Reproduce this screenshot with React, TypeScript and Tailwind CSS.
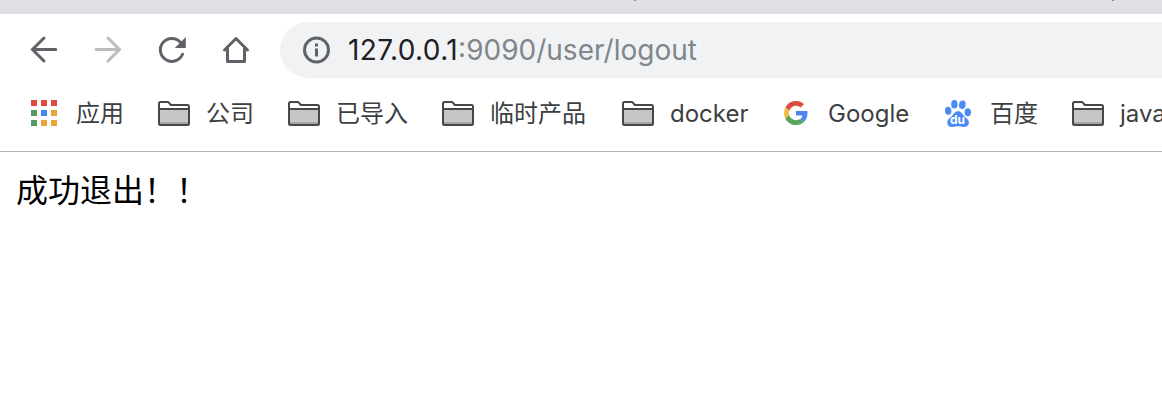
import type { ReactNode } from "react";

const appColors = [
  "#e2483d", "#e2483d", "#e2483d",
  "#549a5e", "#4688f1", "#e6a63a",
  "#549a5e", "#e6a63a", "#e6a63a",
];

function AppsIcon() {
  return (
    <svg className="h-[26px] w-[26px]" viewBox="0 0 26 26" shapeRendering="crispEdges">
      {appColors.map((color, i) => (
        <rect key={i} x={(i % 3) * 10} y={Math.floor(i / 3) * 10} width="6" height="6" fill={color} />
      ))}
    </svg>
  );
}

function FolderIcon() {
  return (
    <svg className="h-[26px] w-8" viewBox="0 0 32 26" fill="none">
      <path d="M1 8H31V23.500Q31 25 29.500 25H2.500Q1 25 1 23.500Z" fill="#c6c6c6" />
      <path d="M2 22H30V24H2Z" fill="#a6a6a6" />
      <path d="M2 3H10L12.500 6H30V8H2Z" fill="#fff" />
      <path
        d="M1 9V3.500Q1 2 2.500 2H9.500Q10.300 2 10.800 2.600L12.800 5H29.500Q31 5 31 6.500V23.500Q31 25 29.500 25H2.500Q1 25 1 23.500ZM1 9H31"
        stroke="#474747"
        strokeWidth="2"
      />
    </svg>
  );
}

function GoogleIcon() {
  return (
    <svg className="h-6 w-6" viewBox="0 0 48 48">
      <path fill="#db4c3f" d="M24 9.500c3.540 0 6.710 1.220 9.210 3.600l6.850-6.850C35.900 2.380 30.470 0 24 0 14.620 0 6.510 5.380 2.560 13.220l7.980 6.190C12.430 13.720 17.740 9.500 24 9.500z" />
      <path fill="#4f86ec" d="M46.980 24.550c0-1.570-.15-3.090-.38-4.550H24v9.020h12.940c-.58 2.960-2.260 5.480-4.780 7.180l7.730 6c4.510-4.180 7.090-10.360 7.090-17.650z" />
      <path fill="#f1bf42" d="M10.530 28.590A14.500 14.500 0 0 1 9.770 24c0-1.600.27-3.140.76-4.590l-7.980-6.190A23.900 23.900 0 0 0 0 24c0 3.880.92 7.540 2.560 10.780l7.970-6.190z" />
      <path fill="#58a55c" d="M24 48c6.480 0 11.930-2.130 15.890-5.810l-7.730-6C30.010 37.640 27.240 38.490 24 38.490c-6.260 0-11.570-4.220-13.470-9.910l-7.980 6.190C6.510 42.620 14.620 48 24 48z" />
    </svg>
  );
}

function BaiduIcon() {
  return (
    <span className="relative block h-7 w-[26px]">
      <svg className="h-7 w-[26px]" viewBox="0 0 26 28" fill="#4b8af5">
        <ellipse cx="3.200" cy="11.800" rx="3.200" ry="4" transform="rotate(-8 3.200 11.800)" />
        <ellipse cx="9.400" cy="5.300" rx="3.200" ry="4.300" />
        <ellipse cx="17.300" cy="5.700" rx="3.300" ry="4.200" transform="rotate(12 17.300 5.700)" />
        <ellipse cx="22.800" cy="13.200" rx="3.200" ry="4" />
        <path d="M13 12.300c3.200 0 4 2.500 6 4.600 2.200 2.300 5.200 3.500 4.900 7.200-.2 3.100-2.800 4-5.300 3.900-2.200-.1-3.600-.7-5.600-.7s-3.400.7-5.700.7c-2.800 0-5-1.300-5-4.500 0-3.300 2.800-4.800 4.900-6.800 2.100-2.100 2.700-4.400 5.800-4.400z" />
      </svg>
      <span className="absolute left-[5px] top-[15px] text-[12px] font-bold leading-[12px] text-white">du</span>
    </span>
  );
}

function Bookmark({ icon, label, width }: { icon: ReactNode; label: string; width: string }) {
  return (
    <div className={`flex h-full shrink-0 items-center gap-4 ${width}`}>
      <span className="flex w-8 shrink-0 justify-center">{icon}</span>
      <span className="whitespace-nowrap pt-0.5">{label}</span>
    </div>
  );
}

function Toolbar() {
  return (
    <div className="flex h-[72px] items-center pl-7">
      <div className="flex w-[252px] shrink-0 gap-8">
        <svg className="h-8 w-8" viewBox="0 0 32 32" fill="none" stroke="#5f6368" strokeWidth="3">
          <path d="M27.800 15.500H5M16 4L4.500 15.500L16 27" strokeLinecap="round" />
        </svg>
        <svg className="h-8 w-8" viewBox="0 0 32 32" fill="none" stroke="#babcbe" strokeWidth="3">
          <path d="M4.200 15.500H27M16 4L27.500 15.500L16 27" strokeLinecap="round" />
        </svg>
        <svg className="h-8 w-8" viewBox="0 0 32 32" fill="none">
          <path d="M26.500 20.200A11.500 11.500 0 1 1 24.400 8.200" stroke="#5f6368" strokeWidth="3" strokeLinecap="round" />
          <path d="M29.800 3V14H18.800Z" fill="#5f6368" />
        </svg>
        <svg className="h-8 w-8" viewBox="0 0 32 32" fill="none" stroke="#5f6368" strokeWidth="3">
          <path d="M4.500 16L16 4.500L27.500 16M7.500 14V27.500H24.500V14" strokeLinecap="round" strokeLinejoin="round" />
        </svg>
      </div>
      <div className="flex h-14 flex-1 items-center rounded-l-full bg-[#f1f2f4] pl-[23px] text-[28px] text-[#80868b]">
        <svg className="mr-[17px] h-7 w-7 shrink-0" viewBox="0 0 28 28" fill="none">
          <circle cx="13.500" cy="14" r="12" stroke="#5f6368" strokeWidth="3" />
          <path d="M12 7.500H15V10.500H12ZM12 12.500H15V20.500H12Z" fill="#5f6368" />
        </svg>
        <span className="whitespace-nowrap">
          <span className="tracking-[0.4px] text-[#202124]">127.0.0.1</span>:9090/user/logout
        </span>
      </div>
    </div>
  );
}

export default function App() {
  return (
    <div className="flex h-[416px] w-full flex-col overflow-hidden bg-white font-['Inter','Noto_Sans_CJK_SC',sans-serif]">
      <div className="flex h-[14px] shrink-0 bg-[#dfe0e5]">
        <span className="ml-[634px] h-px w-0.5 bg-[#8c8d91]" />
        <span className="ml-[476px] h-px w-0.5 bg-[#8c8d91]" />
      </div>
      <Toolbar />
      <div className="flex h-[66px] shrink-0 items-center overflow-hidden border-b border-[#b4b4b4] pb-[11px] pl-7 text-2xl text-[#3c4043]">
        <Bookmark icon={<AppsIcon />} label="应用" width="w-[130px]" />
        <Bookmark icon={<FolderIcon />} label="公司" width="w-[130px]" />
        <Bookmark icon={<FolderIcon />} label="已导入" width="w-[154px]" />
        <Bookmark icon={<FolderIcon />} label="临时产品" width="w-[180px]" />
        <Bookmark icon={<FolderIcon />} label="docker" width="w-[158px]" />
        <Bookmark icon={<GoogleIcon />} label="Google" width="w-[162px]" />
        <Bookmark icon={<BaiduIcon />} label="百度" width="w-[130px]" />
        <Bookmark icon={<FolderIcon />} label="java" width="w-[130px]" />
      </div>
      <main className="px-4 pt-[13px] font-['Noto_Sans_CJK_SC',sans-serif] text-[32px] leading-[46px] text-black">
        成功退出！！
      </main>
    </div>
  );
}
